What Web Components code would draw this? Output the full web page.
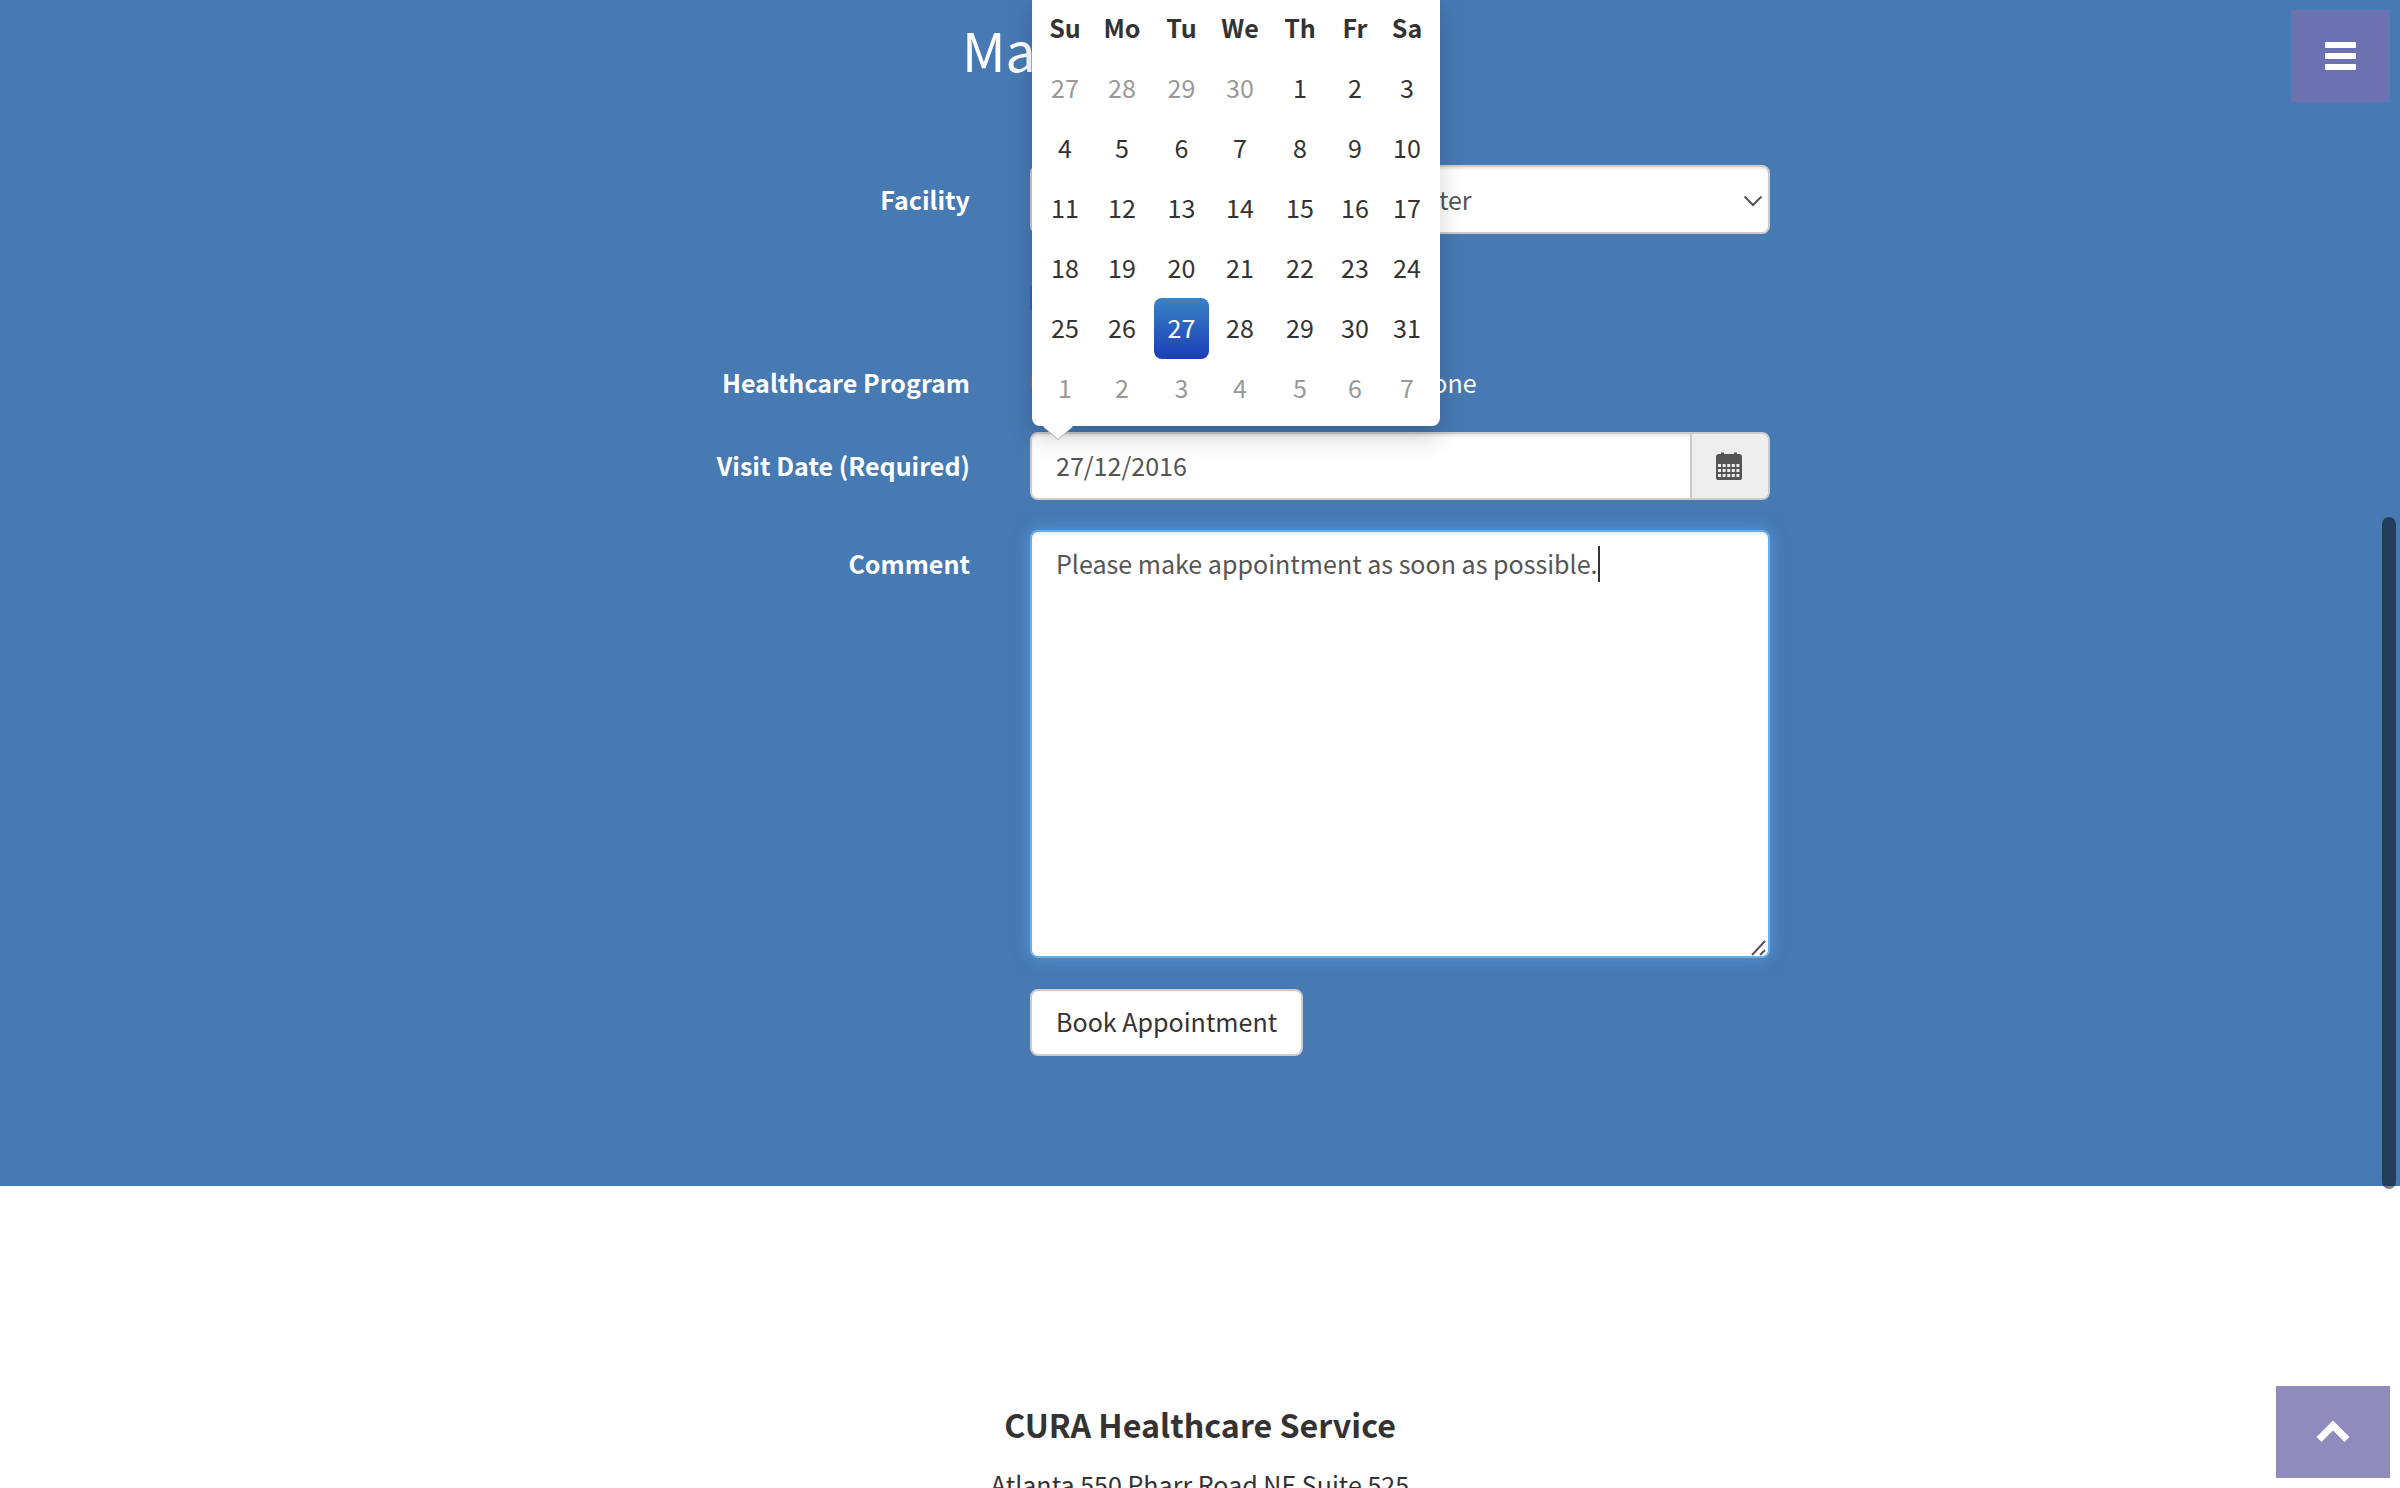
<!DOCTYPE html>
<html lang="en">
<head>
<meta charset="utf-8">
<title>CURA Healthcare Service</title>
<style>
html,body{margin:0;padding:0;background:#fff}
body{font-family:"Noto Sans CJK SC","Liberation Sans",sans-serif;font-size:25px;color:#333}
</style>
</head>
<body>
<page-shell>
  <appointment-section>
    <form-row label="Facility" gap="45">
      <select-field>Hongkong CURA Healthcare Center</select-field>
    </form-row>
    <form-row gap="44">
      <check-field>Apply for hospital readmission</check-field>
    </form-row>
    <form-row label="Healthcare Program" gap="29">
      <radio-group>
        <radio-option checked>Medicare</radio-option>
        <radio-option>Medicaid</radio-option>
        <radio-option>None</radio-option>
      </radio-group>
    </form-row>
    <form-row label="Visit Date (Required)" gap="30" raised>
      <date-field value="27/12/2016"><date-calendar></date-calendar></date-field>
    </form-row>
    <form-row label="Comment" gap="31">
      <comment-box>Please make appointment as soon as possible.</comment-box>
    </form-row>
    <form-row gap="0">
      <action-button>Book Appointment</action-button>
    </form-row>
  </appointment-section>
  <site-footer></site-footer>
  <menu-toggle></menu-toggle>
  <top-button></top-button>
  <scroll-thumb></scroll-thumb>
</page-shell>

<script>
function def(name, css, html, extra){
  class E extends HTMLElement{
    constructor(){
      super();
      const r=this.attachShadow({mode:'open'});
      r.innerHTML='<style>'+css+'</style>'+(typeof html==='function'?html(this):html);
    }
    connectedCallback(){ if(extra) extra(this); }
  }
  customElements.define(name,E);
}

def('page-shell',
 ':host{display:block;position:relative;width:2400px;height:1488px;overflow:hidden;background:#fff}',
 '<slot></slot>');

def('appointment-section',
 ':host{display:block;background:#4779b3;padding:14px 0 130px;color:#fff}'+
 'h2{margin:0 0 81px;font-size:53.7px;line-height:70px;font-weight:400;text-align:center;color:#fff}',
 '<h2>Make Appointment</h2><slot></slot>');

def('form-row',
 ':host{display:grid;grid-template-columns:1000px 800px 600px;position:relative}'+
 ':host([raised]){z-index:5}'+
 '.l{box-sizing:border-box;padding-right:30px;text-align:right;font-weight:700;font-size:25.05px;line-height:38px;padding-top:var(--lt,14px);color:#fff}'+
 '.c{padding:0 30px;min-width:0}',
 h=>'<div class="l">'+(h.getAttribute('label')||'')+'</div><div class="c"><slot></slot></div><div></div>',
 h=>{h.style.marginBottom=(h.getAttribute('gap')||0)+'px';
     const l=h.getAttribute('label');
     if(l==='Healthcare Program')h.style.setProperty('--lt','0px');
     if(l==='Facility')h.style.setProperty('--lt','15px');});

def('select-field',
 ':host{display:flex;align-items:center;box-sizing:border-box;height:69px;padding:0 24px 2px 32px;background:#fff;border:2px solid #ccc;border-radius:8px;box-shadow:inset 0 2px 2px rgba(0,0,0,.075);color:#555;font-size:25.05px;line-height:40px;position:relative}'+
 'svg{position:absolute;right:5px;top:28px}',
 '<slot></slot><svg width="20" height="12" viewBox="0 0 20 12" fill="none" stroke="#555" stroke-width="2"><path d="M1.500 1.500 10 10l8.500-8.500"/></svg>');

def('check-field',
 ':host{display:flex;align-items:center;gap:14px;height:40px;line-height:40px;color:#fff;font-size:25.05px}'+
 'i{display:block;width:26px;height:26px;background:#2a5fd6;border-radius:4px}',
 '<i></i><slot></slot>');

def('radio-group',':host{display:flex;gap:26px;height:38px;padding-bottom:2px;align-items:center}','<slot></slot>');

def('radio-option',
 ':host{display:flex;align-items:center;gap:14px;line-height:38px;color:#fff;font-size:25.05px}'+
 'i{display:block;box-sizing:border-box;width:26px;height:26px;border-radius:50%;background:#fff;border:2px solid #777}',
 '<i></i><slot></slot>');

def('date-field',
 ':host{display:flex;box-sizing:border-box;height:68px;position:relative;border:2px solid #ccc;border-radius:8px;background:#fff;color:#555;font-size:25.05px;line-height:40px;box-shadow:inset 0 2px 2px rgba(0,0,0,.075)}'+
 '.v{flex:1;padding:11px 24px 13px}'+
 '.a{box-sizing:border-box;width:78px;padding-right:2px;border-left:2px solid #ccc;background:#eee;border-radius:0 6px 6px 0;display:flex;align-items:center;justify-content:center}'+
 '::slotted(date-calendar){position:absolute;left:0;bottom:calc(100% + 8px)}',
 h=>'<div class="v">'+h.getAttribute('value')+'</div><div class="a"><svg width="26" height="28" viewBox="0 0 26 28"><path fill="#555" fill-rule="evenodd" d="M3 2h2V0.500h3V2h10V0.500h3V2h2a3 3 0 0 1 3 3v21a2 2 0 0 1-2 2H2a2 2 0 0 1-2-2V5a3 3 0 0 1 3-3Z"/><g fill="#eee">'+
   (()=>{let s='';for(let r=0;r<3;r++)for(let c=0;c<5;c++)s+='<rect x="'+(2+c*4.6)+'" y="'+(12+r*5)+'" width="3" height="3"/>';return s;})()
   +'</g></svg></div><slot></slot>');

def('date-calendar',
 ':host{display:block;box-sizing:border-box;width:408px;padding:0 7px 8px 8px;background:#fff;border-radius:0 0 8px 8px;box-shadow:0 12px 24px rgba(0,0,0,.175);color:#333;font-size:25.05px}'+
 ':host::after{content:"";position:absolute;left:11px;top:100%;width:0;height:0;border-left:15px solid transparent;border-right:15px solid transparent;border-top:13px solid #fff;filter:drop-shadow(0 1px 0 #aaa)}'+
 '.g{display:grid;grid-template-columns:50px 64px 55px 62px 58px 52px 52px;grid-auto-rows:60px;text-align:center;line-height:59px}'+
 'b{font-weight:700}'+
 '.o{color:#999}'+
 '.s{color:#fff;background:linear-gradient(#3b82c4,#1a3eb8);border-radius:8px;height:61px}',
 ()=>{
   const dow=['Su','Mo','Tu','We','Th','Fr','Sa'];
   let c=dow.map(d=>'<b>'+d+'</b>').join('');
   [27,28,29,30].forEach(n=>c+='<span class="o">'+n+'</span>');
   for(let i=1;i<=31;i++)c+='<span'+(i===27?' class="s"':'')+'>'+i+'</span>';
   for(let i=1;i<=7;i++)c+='<span class="o">'+i+'</span>';
   return '<div class="g">'+c+'</div>';
 });

def('comment-box',
 ':host{display:block;box-sizing:border-box;height:428px;position:relative;padding:11px 24px;background:#fff;border:2px solid #66afe9;border-radius:8px;box-shadow:inset 0 2px 2px rgba(0,0,0,.075),0 0 16px rgba(102,175,233,.6);color:#555;font-size:25.05px;line-height:40px}'+
 '.caret{display:inline-block;width:2px;height:36px;background:#333;vertical-align:-8px}'+
 'svg{position:absolute;right:0;bottom:0}',
 '<slot></slot><span class="caret"></span><svg width="18" height="18" viewBox="0 0 18 18" fill="none" stroke="#555" stroke-width="2"><path d="M2 17 15 3M10 17l5-5"/></svg>');

def('action-button',
 ':host{display:inline-block;box-sizing:border-box;height:67px;padding:0 24px;background:#fff;border:2px solid #ccc;border-radius:8px;color:#333;font-size:25.05px;line-height:61px}',
 '<slot></slot>');

def('site-footer',
 ':host{display:block;text-align:center;padding-top:214px;color:#333}'+
 'h4{margin:0 0 16px;font-size:32.2px;line-height:48px;font-weight:700;color:#333}'+
 'p{margin:0;font-size:25.05px;line-height:40px}',
 '<h4>CURA Healthcare Service</h4><p>Atlanta 550 Pharr Road NE Suite 525</p>');

def('menu-toggle',
 ':host{position:absolute;left:2291px;top:10px;width:99px;height:92px;background:#6c71b0;display:flex;flex-direction:column;align-items:center;justify-content:center;gap:5px}'+
 'i{display:block;width:31px;height:6px;background:#fff;border-radius:1px}',
 '<i></i><i></i><i></i>');

def('top-button',
 ':host{position:absolute;left:2276px;top:1386px;width:114px;height:92px;background:#8f8cbd;display:flex;align-items:center;justify-content:center}',
 '<svg width="34" height="22" viewBox="0 0 34 22" fill="none" stroke="#fff" stroke-width="7" stroke-linejoin="miter"><path d="M3 18.500 17 4.500l14 14"/></svg>');

def('scroll-thumb',
 ':host{position:absolute;left:2382px;top:517px;width:14px;height:672px;border-radius:7px;background:rgba(0,0,0,.5)}','');
</script>
</body>
</html>
